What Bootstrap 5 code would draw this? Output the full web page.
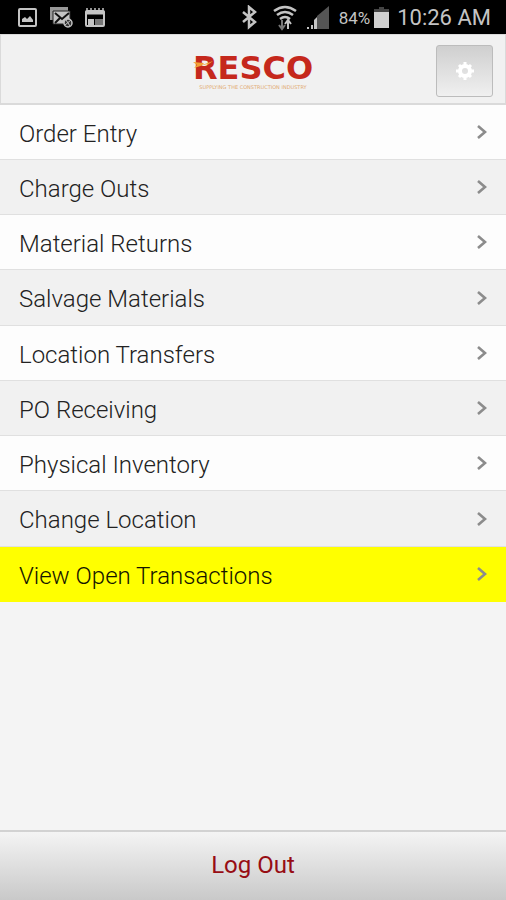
<!DOCTYPE html>
<html lang="en">
<head>
<meta charset="utf-8">
<meta name="viewport" content="width=device-width, initial-scale=1">
<title>RESCO</title>
<link href="https://cdn.jsdelivr.net/npm/bootstrap@5.3.0/dist/css/bootstrap.min.css" rel="stylesheet">
<style>
  body { font-family: Roboto, "Liberation Sans", sans-serif; background: #f4f4f4; }
  svg { display: block; flex: none; }
  .status-bar { background: #000; color: #c4c4c4; height: 34px; padding: 2px 15px 0 16px; line-height: 32px; }
  .status-battery { font-size: 17px; }
  .status-clock { font-size: 22px; }
  .app-header { height: 71px; background: #f1f1f1; border: 1px solid #dadada; border-bottom-width: 2px; padding: 3px 12px 0; display: grid; grid-template-columns: 1fr auto 1fr; align-items: center; }
  .brand { grid-column: 2; text-align: center; line-height: 1; }
  .brand-name { font: bold 32px/32px "DejaVu Sans", sans-serif; color: #c5281c; }
  .brand-flash { left: 0; top: 7px; }
  .brand-tag { font: 5px/6px "DejaVu Sans", sans-serif; color: #e2ab72; white-space: nowrap; }
  .gear-btn { justify-self: end; width: 57px; height: 52px; border: 1px solid #bcbcbc; border-radius: 3px; background: linear-gradient(#cfcfcf, #f0f0f0); }
  .menu-row { height: 55px; padding: 0 18px 0 19px; background: #fdfdfd; color: #222; font-size: 24px; font-weight: 300; border-bottom: 1px solid #e0e0e0; }
  .menu-row span { padding-top: 3px; }
  .menu-row:nth-child(even) { background: #f1f1f1; }
  .menu-row:nth-child(4n) { height: 56px; }
  .menu-row:last-child { background: #ff0; color: #141400; border-color: #ff0; }
  .logout-btn { height: 70px; border: 0; border-top: 2px solid #d2d2d2; background: linear-gradient(#f4f4f4, #c9c9c9); color: #970d14; font-size: 24px; padding-bottom: 4px; }
</style>
</head>
<body class="d-flex flex-column min-vh-100">
<div class="status-bar d-flex align-items-center">
  <svg width="90" height="22" viewBox="0 0 90 22" fill="none" stroke="#c4c4c4" stroke-width="2" aria-hidden="true">
    <rect x="3" y="2" width="17" height="17" rx="1"/>
    <path d="M6 15v-3l3-2 2 2 3-3 3 4v2z" fill="#c4c4c4" stroke="none"/>
    <path d="M34 0h18v4H38v9h-4z" fill="#999" stroke="none"/>
    <path d="M37 4h17v13H37z" fill="#c4c4c4" stroke="#222" stroke-width="1"/>
    <path d="m39 6 7 6 7-6m-14 10 5-5" stroke="#111" stroke-width="2"/>
    <circle cx="52" cy="16" r="4" fill="#333" stroke-width="1.5"/>
    <path d="m49 18 6-5m-5 0 4 6" stroke-width="1"/>
    <rect x="70" y="4" width="18" height="15" rx="1"/>
    <path d="M69 6h20" stroke-width="3"/>
    <path d="M71 1v4m4-4v4m4-4v4m4-4v4m4-4v4" stroke-width="1.5"/>
    <path d="M72 12h6v6h-6z" fill="#c4c4c4" stroke="none"/>
    <path d="M79 12h8v6h-8z" fill="#777" stroke="none"/>
  </svg>
  <svg class="ms-auto" width="90" height="26" viewBox="0 0 90 26" fill="none" stroke="#c4c4c4" stroke-width="2" aria-hidden="true">
    <path d="m2 7 12 10-6 5V2l6 5L2 17" stroke-width="2.5"/>
    <path d="M33 6q11-8 22 0m-19 4q8-6 16 0m-13 4q5-4 10 0" stroke-width="2.5"/>
    <path d="M41 15v8m-3-3 3 4 3-4" stroke="#777"/>
    <path d="M47 24v-8m-3 3 3-4 3 4"/>
    <path d="M76 11 88 1v23H76z" fill="#555" stroke="none"/>
    <path d="M67 24v-2m4 2v-4"/>
    <path d="M73 24V15l3-3v12z" fill="#c4c4c4" stroke="none"/>
  </svg>
  <span class="status-battery ms-2">84%</span>
  <svg class="ms-1" width="15" height="22" viewBox="0 0 15 22" aria-hidden="true"><path d="M5 0h5v2H5z" fill="#444"/><path d="M0 2h15v3H0z" fill="#444"/><path d="M0 5h15v16H0z" fill="#d0d0d0"/></svg>
  <span class="status-clock ms-2">10:26 AM</span>
</div>
<header class="app-header">
  <div class="brand position-relative">
    <div class="brand-name">RESCO</div>
    <svg class="brand-flash position-absolute" width="24" height="10" viewBox="0 0 24 10" aria-hidden="true"><path d="M0 3 11 4 9 6 20 2 13 7l1-2L1 9l3-3z" fill="#f2a234"/></svg>
    <div class="brand-tag">SUPPLYING THE CONSTRUCTION INDUSTRY</div>
  </div>
  <button class="gear-btn d-flex align-items-center justify-content-center p-0" type="button" aria-label="Settings">
    <svg width="20" height="20" viewBox="-10 -10 20 20" fill="none" stroke="#fff" aria-hidden="true"><circle r="5" stroke-width="4"/><path d="M0-9V-6M0 9V6M-9 0h3M9 0H6M-6-6l2 2M6 6 4 4M-6 6l2-2M6-6 4-4" stroke-width="3"/></svg>
  </button>
</header>
<svg class="d-none" aria-hidden="true"><symbol id="chevron" viewBox="0 0 12 16"><path d="m2 2 7 6-7 6" fill="none" stroke="#8c8c8c" stroke-width="2.6"/></symbol></svg>
<nav class="d-flex flex-column" aria-label="Main menu">
  <a class="menu-row d-flex align-items-center justify-content-between text-decoration-none" href="#"><span>Order Entry</span><svg width="12" height="16"><use href="#chevron"/></svg></a>
  <a class="menu-row d-flex align-items-center justify-content-between text-decoration-none" href="#"><span>Charge Outs</span><svg width="12" height="16"><use href="#chevron"/></svg></a>
  <a class="menu-row d-flex align-items-center justify-content-between text-decoration-none" href="#"><span>Material Returns</span><svg width="12" height="16"><use href="#chevron"/></svg></a>
  <a class="menu-row d-flex align-items-center justify-content-between text-decoration-none" href="#"><span>Salvage Materials</span><svg width="12" height="16"><use href="#chevron"/></svg></a>
  <a class="menu-row d-flex align-items-center justify-content-between text-decoration-none" href="#"><span>Location Transfers</span><svg width="12" height="16"><use href="#chevron"/></svg></a>
  <a class="menu-row d-flex align-items-center justify-content-between text-decoration-none" href="#"><span>PO Receiving</span><svg width="12" height="16"><use href="#chevron"/></svg></a>
  <a class="menu-row d-flex align-items-center justify-content-between text-decoration-none" href="#"><span>Physical Inventory</span><svg width="12" height="16"><use href="#chevron"/></svg></a>
  <a class="menu-row d-flex align-items-center justify-content-between text-decoration-none" href="#"><span>Change Location</span><svg width="12" height="16"><use href="#chevron"/></svg></a>
  <a class="menu-row d-flex align-items-center justify-content-between text-decoration-none" href="#"><span>View Open Transactions</span><svg width="12" height="16"><use href="#chevron"/></svg></a>
</nav>
<footer class="mt-auto">
  <button class="logout-btn d-block w-100" type="button">Log Out</button>
</footer>
<script src="https://cdn.jsdelivr.net/npm/bootstrap@5.3.0/dist/js/bootstrap.bundle.min.js"></script>
</body>
</html>
